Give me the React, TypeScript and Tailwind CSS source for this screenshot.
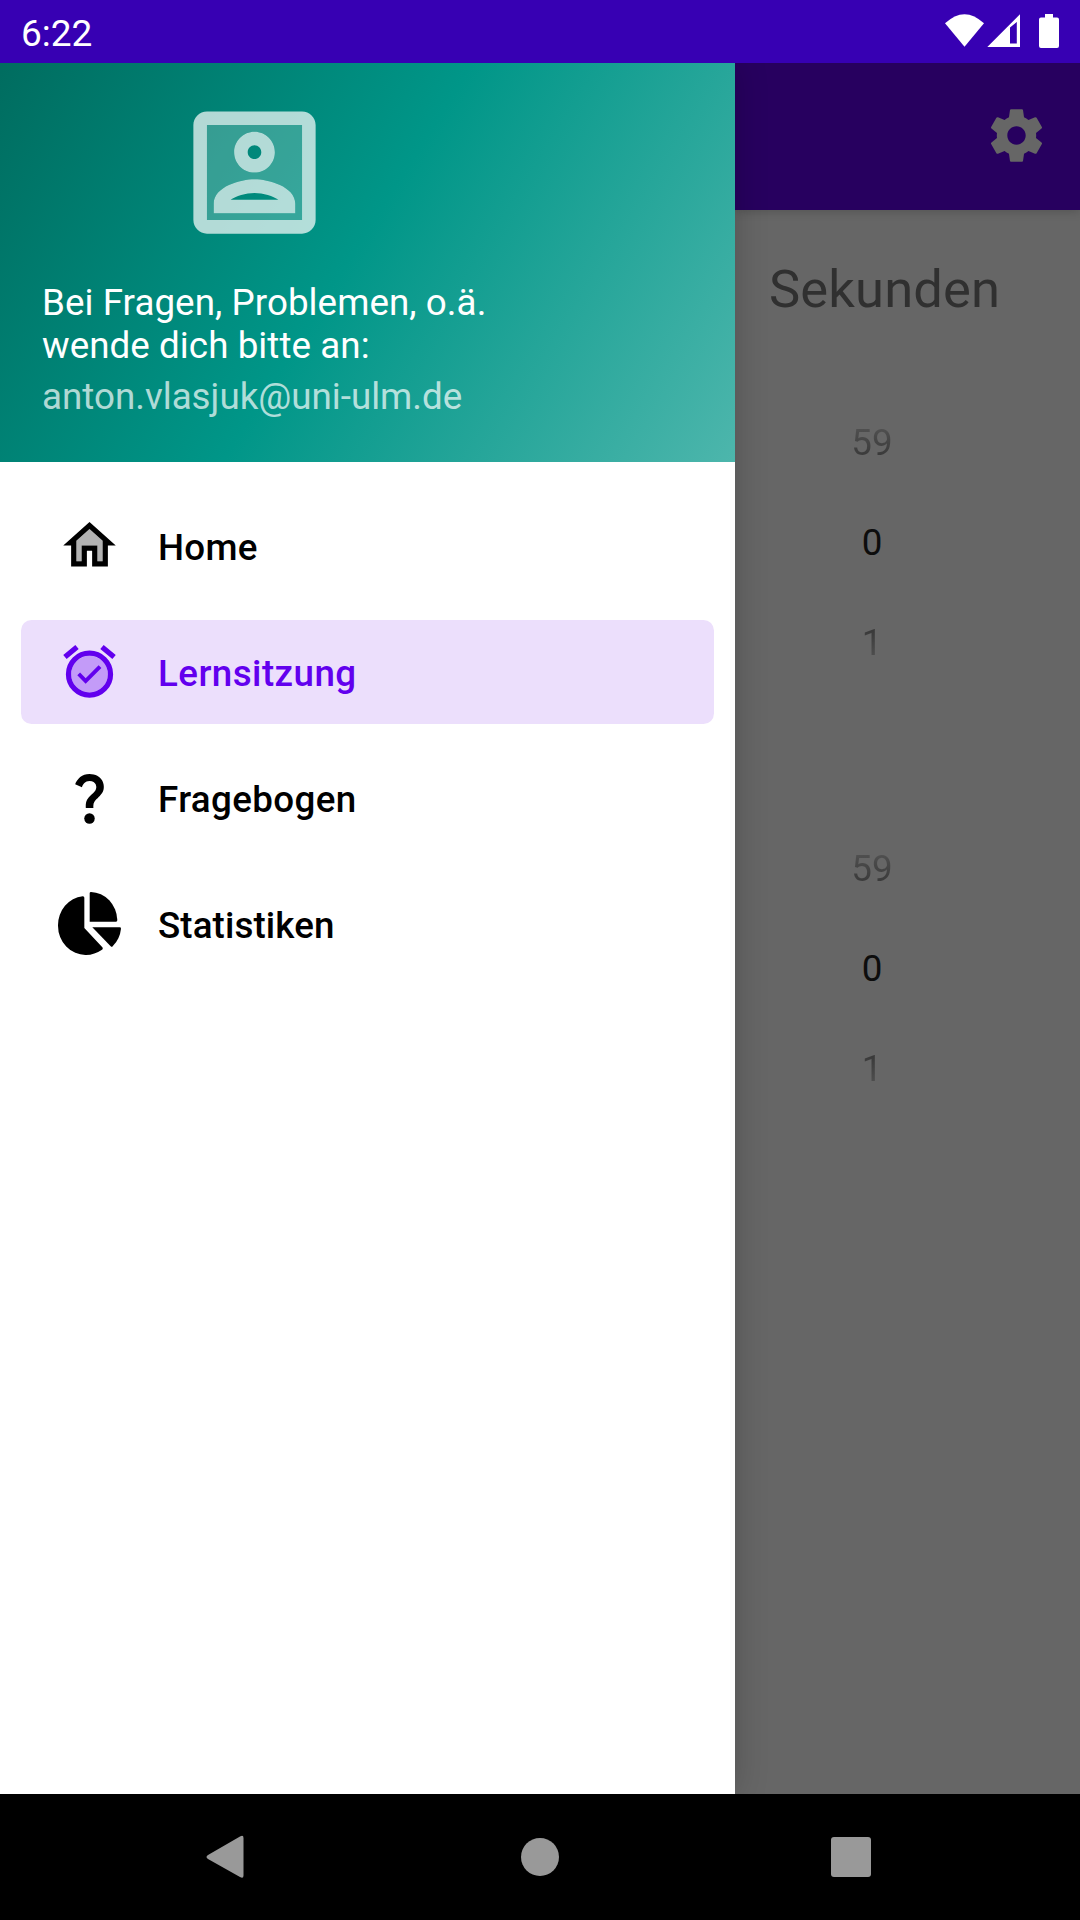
const glyph = "block shrink-0";
const menuGlyph = "mb-px block shrink-0";

function StatusBar() {
  return (
    <header className="relative z-20 flex h-[63px] shrink-0 items-center justify-between bg-[#3700b3] pl-[21px] text-white">
      <span className="pt-[4px] text-[37px] leading-none">6:22</span>
      <svg className={glyph} width="140" height="63" viewBox="940 0 140 63" fill="currentColor">
        <path d="M945 23.3Q964.5 5 984 23.3L964.5 46.7Z" />
        <path fillRule="evenodd" d="M987.3 47L1020 14.3V47ZM1010 27.6V43.4H1016.8V21.9Z" />
        <path d="M1045 14h8v3.4h4q2 0 2 2V46q0 2-2 2h-16q-2 0-2-2V19.4q0-2 2-2h4z" />
      </svg>
    </header>
  );
}

function DrawerHeader() {
  return (
    <div className="-mt-[63px] flex h-[462px] shrink-0 flex-col bg-[linear-gradient(122.15deg,#00695c_0%,#009688_50%,#4db6ac_100%)] pl-[42px] pt-[91px] text-[36.75px] leading-[43px] text-white">
      <svg className="ml-[131px] block shrink-0 opacity-70" width="163" height="163" viewBox="0 0 24 24" fill="currentColor">
        <path opacity=".3" d="M5 19h14V5H5v14zm7-13c1.65 0 3 1.35 3 3s-1.35 3-3 3-3-1.35-3-3 1.35-3 3-3zM6 16.58C6 14.08 9.97 13 12 13s6 1.08 6 3.58V18H6v-1.42z" />
        <path d="M12 12c1.65 0 3-1.35 3-3s-1.35-3-3-3-3 1.35-3 3 1.35 3 3 3zm0-4c.55 0 1 .45 1 1s-.45 1-1 1-1-.45-1-1 .45-1 1-1zm6 8.58c0-2.5-3.97-3.58-6-3.58s-6 1.08-6 3.58V18h12v-1.42zM8.48 16c.74-.51 2.23-1 3.52-1s2.78.49 3.52 1H8.48zM19 3H5c-1.1 0-2 .9-2 2v14c0 1.1.9 2 2 2h14c1.1 0 2-.9 2-2V5c0-1.1-.9-2-2-2zm0 16H5V5h14v14z" />
      </svg>
      <p className="mt-[27px] tracking-[0.06px]">
        Bei Fragen, Problemen, o.ä.
        <br />
        wende dich bitte an:
      </p>
      <p className="mt-[8px] text-white/70">anton.vlasjuk@uni-ulm.de</p>
    </div>
  );
}

function HomeIcon() {
  return (
    <svg className={menuGlyph} width="63" height="63" viewBox="0 0 24 24" fill="currentColor">
      <path opacity=".3" d="M7 10.19V18h2v-6h6v6h2v-7.81l-5-4.5z" />
      <path d="M12 3L2 12h3v8h6v-6h2v6h6v-8h3L12 3zm5 15h-2v-6H9v6H7v-7.81l5-4.5 5 4.5V18z" />
    </svg>
  );
}

function AlarmIcon() {
  return (
    <svg className={menuGlyph} width="63" height="63" viewBox="0 0 24 24" fill="currentColor">
      <circle cx="12" cy="13" r="7" opacity=".3" />
      <circle cx="12" cy="13" r="8" fill="none" stroke="currentColor" strokeWidth="2" />
      <path d="M10.54 14.53L8.41 12.4l-1.06 1.06 3.18 3.18 6-6-1.06-1.06zM7.88 3.39L6.6 1.86 2 5.71l1.29 1.53zM22 5.72l-4.6-3.86-1.29 1.53 4.6 3.86z" />
    </svg>
  );
}

function QuestionIcon() {
  return (
    <svg className={menuGlyph} width="63" height="63" viewBox="0 0 24 24" fill="currentColor">
      <path d="M11.07 12.85c.77-1.39 2.25-2.21 3.11-3.44.91-1.29.4-3.7-2.18-3.7-1.69 0-2.52 1.28-2.87 2.34L6.54 6.96C7.25 4.83 9.18 3 11.99 3c2.35 0 3.96 1.07 4.78 2.41.7 1.15 1.11 3.3.03 4.9-1.2 1.77-2.35 2.31-2.97 3.45-.25.46-.35.76-.35 2.24h-2.89c-.01-.78-.13-2.05.48-3.15z" />
      <circle cx="12" cy="20" r="2" />
    </svg>
  );
}

function PieIcon() {
  return (
    <svg className={menuGlyph} width="63" height="63" viewBox="0 0 189 189" fill="currentColor">
      <path d="M79 17Q79 12 74 12.500A83 88 0 0 0 0 101A83 88 0 0 0 84 189Q110 188 132 173Q136 170 133 166L79 108Z" />
      <path d="M95 4Q95 0 99 0A81 88 0 0 1 178 84Q178 89 174 89H95Z" />
      <path d="M103 106H185Q189 106 189 110Q186 140 164 163Q161 166 158 163Z" />
    </svg>
  );
}

const items = [
  { label: "Home", Icon: HomeIcon, active: false, tracking: "tracking-[0.26px]" },
  { label: "Lernsitzung", Icon: AlarmIcon, active: true, tracking: "tracking-[0.44px]" },
  { label: "Fragebogen", Icon: QuestionIcon, active: false, tracking: "tracking-[0.36px]" },
  { label: "Statistiken", Icon: PieIcon, active: false, tracking: "tracking-[0.1px]" },
];

function Drawer() {
  return (
    <aside className="relative z-10 flex w-[735px] shrink-0 flex-col bg-white shadow-[0_0_32px_rgba(0,0,0,0.2)]">
      <DrawerHeader />
      <nav className="flex flex-col gap-[22px] px-[21px] pt-[32px]">
        {items.map(({ label, Icon, active, tracking }) => (
          <a
            key={label}
            className={
              active
                ? "flex h-[104px] items-center gap-[37px] rounded-[10.5px] bg-[#ecdffc] pl-[37px] text-[#6200ee]"
                : "flex h-[104px] items-center gap-[37px] rounded-[10.5px] pl-[37px] text-black"
            }
          >
            <Icon />
            <span className={`pt-[2px] text-[36.75px] font-medium leading-[43px] ${tracking}`}>{label}</span>
          </a>
        ))}
      </nav>
    </aside>
  );
}

function NumberPicker() {
  return (
    <div className="flex w-[168px] flex-col items-center text-[36.75px] leading-[100px]">
      <span className="bg-[linear-gradient(#505050_35%,#383838_65%)] bg-clip-text text-transparent">59</span>
      <span className="text-[#0d0d0d]">0</span>
      <span className="bg-[linear-gradient(#383838_35%,#505050_65%)] bg-clip-text text-transparent">1</span>
    </div>
  );
}

function DimmedPage() {
  return (
    <main className="flex min-w-0 flex-1 flex-col bg-[#666666]">
      <div className="flex h-[147px] shrink-0 items-center justify-end bg-[#27005f] pb-[2px] pr-[32px] text-[#666666] shadow-[0_1px_10px_rgba(0,0,0,0.2)]">
        <svg className={glyph} width="63" height="63" viewBox="0 0 24 24" fill="currentColor">
          <path d="M19.43 12.98c.04-.32.07-.64.07-.98s-.03-.66-.07-.98l2.11-1.65c.19-.15.24-.42.12-.64l-2-3.46c-.12-.22-.39-.3-.61-.22l-2.49 1c-.52-.4-1.08-.73-1.69-.98l-.38-2.65C14.46 2.18 14.25 2 14 2h-4c-.25 0-.46.18-.49.42l-.38 2.65c-.61.25-1.17.59-1.69.98l-2.49-1c-.23-.09-.49 0-.61.22l-2 3.46c-.13.22-.07.49.12.64l2.11 1.65c-.04.32-.07.65-.07.98s.03.66.07.98l-2.11 1.65c-.19.15-.24.42-.12.64l2 3.46c.12.22.39.3.61.22l2.49-1c.52.4 1.08.73 1.69.98l.38 2.65c.03.24.24.42.49.42h4c.25 0 .46-.18.49-.42l.38-2.65c.61-.25 1.17-.59 1.69-.98l2.49 1c.23.09.49 0 .61-.22l2-3.46c.12-.22.07-.49-.12-.64l-2.11-1.65zM12 15.5c-1.93 0-3.5-1.57-3.5-3.5s1.57-3.5 3.5-3.5 3.5 1.57 3.5 3.5-1.57 3.5-3.5 3.5z" />
        </svg>
      </div>
      <h1 className="mt-[46px] pl-[34px] text-[52.5px] leading-[66px] tracking-[0.15px] text-[#303030]">Sekunden</h1>
      <div className="mt-[71px] flex flex-col gap-[126px] pl-[53px]">
        <NumberPicker />
        <NumberPicker />
      </div>
    </main>
  );
}

function NavigationBar() {
  return (
    <footer className="relative z-20 flex h-[126px] shrink-0 items-center bg-black text-[#999999]">
      <svg className={glyph} width="1080" height="126" viewBox="0 0 1080 126" fill="currentColor">
        <path d="M208 61Q205 63 208 65L240 83Q243.5 85 243.5 81.5V44Q243.5 40.5 240 42.5Z" />
        <circle cx="540" cy="63" r="19" />
        <rect x="831" y="43" width="40" height="40" rx="3" />
      </svg>
    </footer>
  );
}

export default function App() {
  return (
    <div className="flex h-[1920px] w-[1080px] flex-col overflow-hidden bg-black font-[Roboto,sans-serif]">
      <StatusBar />
      <div className="flex min-h-0 flex-1">
        <Drawer />
        <DimmedPage />
      </div>
      <NavigationBar />
    </div>
  );
}
